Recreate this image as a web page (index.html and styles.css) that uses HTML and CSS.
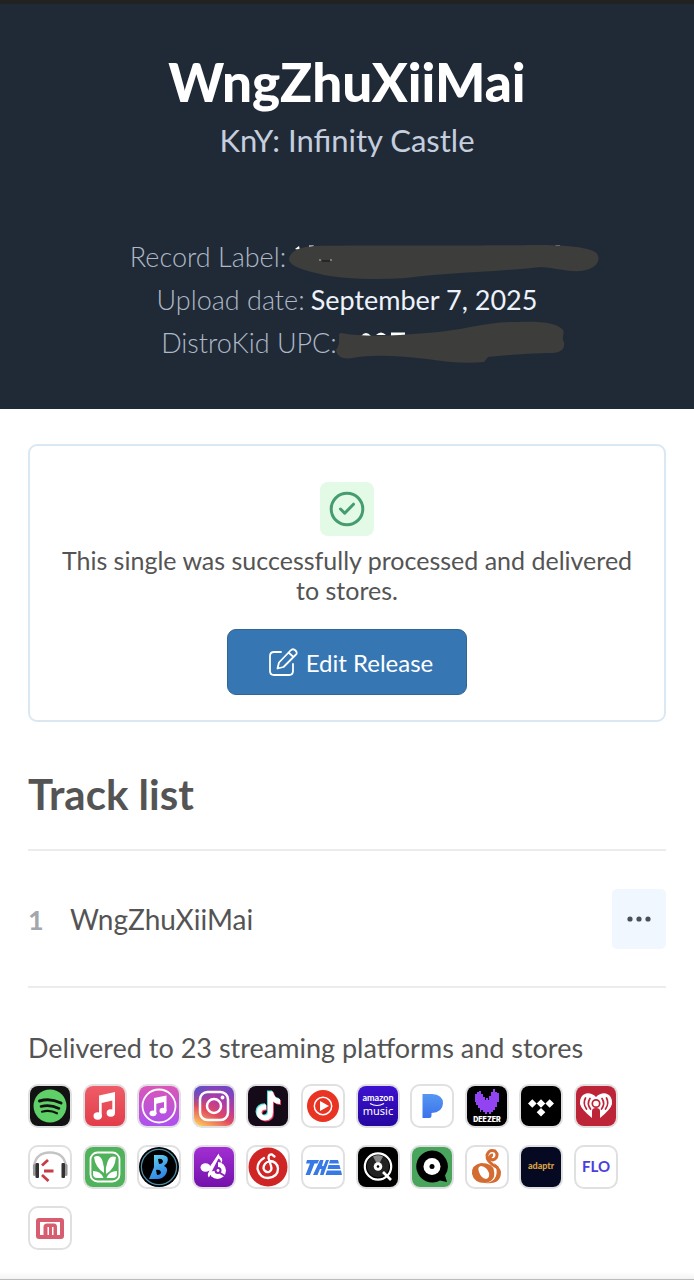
FILE: index.html
```html
<!DOCTYPE html>
<html lang="en">
<head>
<meta charset="utf-8">
<meta name="viewport" content="width=device-width, initial-scale=1">
<title>WngZhuXiiMai</title>
<link rel="stylesheet" href="styles.css">
</head>
<body>
<header class="hero">
  <h1 class="hero-title">WngZhuXiiMai</h1>
  <p class="hero-artist">KnY: Infinity Castle</p>
  <dl class="meta">
    <div class="meta-row">
      <dt>Record Label:</dt>
      <dd class="hidden-value hidden-label"><svg class="scribble" width="320" height="46" viewBox="0 0 320 46" aria-hidden="true">
        <path d="M9 14l4-3 1 4zM23 10.500h5l-2 3h-3zM269 10.500h5v3z" fill="#fff"/>
        <path d="M3 24C4 16 14 12 28 11C90 10 190 11 250 10C280 10 300 12 309 17C316 22 313 34 295 36C282 37 270 33 255 32C210 37 170 37 120 43C90 45 60 44 38 40C22 36 3 32 3 24Z" fill="#3d3d3c"/>
        <path d="M33 25h2M44 25h2" stroke="#bbb"/><path d="M36 26h8" stroke="#111"/>
      </svg></dd>
    </div>
    <div class="meta-row">
      <dt>Upload date:</dt>
      <dd>September 7, 2025</dd>
    </div>
    <div class="meta-row">
      <dt>DistroKid UPC:</dt>
      <dd class="hidden-value hidden-upc"><svg class="scribble" width="240" height="46" viewBox="0 0 240 46" aria-hidden="true">
        <path d="M24 15q5-6 10 0zM39 14q5-5 10 0zM54 11.500h14v4H54z" fill="#fff"/>
        <path d="M4 12C25 16 55 15 90 12C125 10 150 0 180 1C205 0 220 2 226 9C228 13 224 17 227 21C228 29 224 31 215 32C190 32 165 35 151 36L147 41C130 43 110 41 90 38C65 35 35 33 15 37C5 39 0 35 -1 29C3 24 2 19 2 13Z" fill="#3d3d3c"/>
      </svg></dd>
    </div>
  </dl>
</header>

<main class="content">
  <section class="status-card">
    <span class="status-badge">
      <svg width="36" height="36" viewBox="0 0 36 36" fill="none" stroke="#459c6f" stroke-width="3" stroke-linecap="round" stroke-linejoin="round" aria-hidden="true"><circle cx="18" cy="18" r="15.8"/><path d="M11.500 18l4.200 4.200 8.800-9"/></svg>
    </span>
    <p class="status-text">This single was successfully processed and delivered to stores.</p>
    <button class="edit-button" type="button">
      <svg width="30" height="30" viewBox="0 0 30 30" fill="none" stroke="currentColor" stroke-width="1.800" stroke-linecap="round" stroke-linejoin="round" aria-hidden="true"><path d="M13 5H6Q2 5 2 9V24Q2 28 6 28H21Q25 28 25 24V17M9.500 21.500L11 15.500 22.500 3.500Q25 1 27.500 3.500T27.500 8L15.500 20ZM20.500 5.500L25.500 10"/></svg>
      Edit Release
    </button>
  </section>

  <section class="tracks">
    <h2 class="tracks-title">Track list</h2>
    <ol class="track-list">
      <li class="track">
        <span class="track-number">1</span>
        <span class="track-name">WngZhuXiiMai</span>
        <button class="track-menu" type="button" aria-label="Track options">
          <svg width="24" height="6" viewBox="0 0 24 6" fill="currentColor" aria-hidden="true"><circle cx="3" cy="3" r="2.600"/><circle cx="12" cy="3" r="2.600"/><circle cx="21" cy="3" r="2.600"/></svg>
        </button>
      </li>
    </ol>
  </section>

  <section class="stores">
    <p class="stores-text">Delivered to 23 streaming platforms and stores</p>
    <ul class="store-grid">
      <li class="store"><svg viewBox="0 0 40 40" role="img" aria-label="Spotify"><rect width="40" height="40" fill="#121212"/><circle cx="20" cy="20" r="16.500" fill="#5fd068"/><g fill="none" stroke="#121212" stroke-linecap="round"><path d="M9.500 15Q20 11.500 31 17" stroke-width="3"/><path d="M11 20.500Q20 18 29 22.500" stroke-width="2.600"/><path d="M12 25.700Q20 23.500 27 27.300" stroke-width="2.200"/></g></svg></li>
      <li class="store"><svg viewBox="0 0 40 40" role="img" aria-label="Apple Music"><defs><linearGradient id="am" x2="0" y2="1"><stop stop-color="#ee5d68"/><stop offset="1" stop-color="#e23d49"/></linearGradient></defs><rect width="40" height="40" fill="url(#am)"/><g fill="#fff"><path d="M14 9.500L30 6V27H27.300V14.500L16.700 17V31H14Z"/><ellipse cx="12.700" cy="30" rx="4.200" ry="3.700"/><ellipse cx="25.800" cy="27" rx="4.200" ry="3.700"/></g></svg></li>
      <li class="store"><svg viewBox="0 0 40 40" role="img" aria-label="iTunes"><defs><linearGradient id="it" x2="0" y2="1"><stop stop-color="#d957b8"/><stop offset="1" stop-color="#ad50ee"/></linearGradient></defs><rect width="40" height="40" fill="url(#it)"/><circle cx="20" cy="20" r="16.500" fill="none" stroke="#fff" stroke-width="1.800"/><g fill="#fff"><path d="M15 12L27.500 9.500V25H25V16L17.300 17.700V28H15Z"/><ellipse cx="14" cy="27.300" rx="3.500" ry="2.900"/><ellipse cx="24" cy="24.700" rx="3.500" ry="2.900"/></g></svg></li>
      <li class="store"><svg viewBox="0 0 40 40" role="img" aria-label="Instagram"><defs><linearGradient id="ig" x1=".7" y1="0" x2=".2" y2="1"><stop stop-color="#7446c4"/><stop offset=".35" stop-color="#b63aa2"/><stop offset=".65" stop-color="#e24a60"/><stop offset="1" stop-color="#fbc35b"/></linearGradient><radialGradient id="ig2" cx="0" cy="0" r=".55"><stop stop-color="#4a55d0"/><stop offset="1" stop-color="#4a55d0" stop-opacity="0"/></radialGradient></defs><rect width="40" height="40" fill="url(#ig)"/><rect width="40" height="40" fill="url(#ig2)"/><g fill="none" stroke="#fff" stroke-width="2.500"><rect x="6" y="6" width="28" height="28" rx="7.500"/><circle cx="20" cy="20" r="7"/></g><circle cx="28.500" cy="11.500" r="1.900" fill="#fff"/></svg></li>
      <li class="store"><svg viewBox="0 0 40 40" role="img" aria-label="TikTok"><defs><path id="tt" d="M20 5.500H25Q25.800 12 32 13V18Q28 18 25 15.500V26Q25 34.500 16.500 34.500Q9 34 8.500 26.500Q9 18.500 18 18.300V23.500Q13.700 23.300 13.500 26.500Q14 29.500 16.700 29.500Q20 29.300 20 25.500Z"/></defs><rect width="40" height="40" fill="#150b18"/><use href="#tt" x="-1" y="-1" fill="#4fe3df"/><use href="#tt" x="1" y="1" fill="#f0426a"/><use href="#tt" fill="#fff"/></svg></li>
      <li class="store"><svg viewBox="0 0 40 40" role="img" aria-label="YouTube Music"><circle cx="20" cy="20" r="16" fill="#e93323"/><circle cx="20" cy="20" r="8.700" fill="none" stroke="#fff" stroke-width="1.500"/><path d="M17 15L26 20 17 25Z" fill="#fff"/></svg></li>
      <li class="store"><svg viewBox="0 0 40 40" role="img" aria-label="Amazon Music"><defs><linearGradient id="az" x2="0" y2="1"><stop stop-color="#3d12d0"/><stop offset="1" stop-color="#2507a0"/></linearGradient></defs><rect width="40" height="40" fill="url(#az)"/><text class="t-amazon" x="20" y="15">amazon</text><path d="M12 17.500Q19 21.500 26 17.500" fill="none" stroke="#fff" stroke-width="1.200"/><text class="t-music" x="20" y="29">music</text></svg></li>
      <li class="store"><svg viewBox="0 0 40 40" role="img" aria-label="Pandora"><defs><linearGradient id="pd" x2="0" y2="1"><stop stop-color="#5598f0"/><stop offset="1" stop-color="#3c71ec"/></linearGradient></defs><path d="M10.500 8H20Q31 8.500 31 17.500Q30.500 26.500 19.500 27V29.500Q19.500 32 17 32H10.500Z" fill="url(#pd)"/></svg></li>
      <li class="store"><svg viewBox="0 0 40 40" role="img" aria-label="Deezer"><rect width="40" height="40" fill="#000"/><path d="M8 8h2V6h2V5h2v3h2v3h2v3h1v-2h2v2h1v-4h2V6h2V3h2v3h2v1h2v9h-2v5h-2v3h-2v2h-2v2h-2v-2h-2v2h-2v-2h-2v-2h-2v2h-1v-4h-2v-3h-2v-3H8Z" fill="#9244f2"/><text class="t-deezer" x="20" y="36">DEEZER</text></svg></li>
      <li class="store"><svg viewBox="0 0 40 40" role="img" aria-label="TIDAL"><rect width="40" height="40" fill="#000"/><path d="M7 17.500l4.300-4.300L15.600 17.500l-4.300 4.300ZM15.700 17.500l4.300-4.300L24.300 17.500 20 21.800ZM24.400 17.500l4.300-4.300L33 17.500l-4.300 4.300ZM15.700 26.200l4.300-4.300 4.300 4.300L20 30.500Z" fill="#fff"/></svg></li>
      <li class="store"><svg viewBox="0 0 40 40" role="img" aria-label="iHeartRadio"><rect width="40" height="40" fill="#bd2437"/><path d="M20 11Q24.500 6.500 30 7.500Q37 10 36 18Q35 23 24 32V25Q24 22 20 22T16 25V32Q5 23 4 18Q3 10 10 7.500Q15.500 6.500 20 11Z" fill="#fff"/><g fill="none" stroke="#bd2437" stroke-width="1.700" stroke-linecap="round"><circle cx="20" cy="17.500" r="3.700"/><path d="M14 12.500Q10.500 17.500 14.500 23M26 12.500Q29.500 17.500 25.500 23M9.500 12Q6.500 17.500 10.500 23M30.500 12Q33.500 17.500 29.500 23"/></g></svg></li>

      <li class="store"><svg viewBox="0 0 40 40" role="img" aria-label="Headphones"><path d="M4 22V19Q6 5.500 20 5.500T36 19V22" fill="none" stroke="#c4c4c4" stroke-width="2.400"/><rect x="3" y="17" width="3" height="12" rx="1.500" fill="#999"/><rect x="34.500" y="17" width="3" height="12" rx="1.500" fill="#999"/><rect x="5.500" y="16" width="3.500" height="15" rx="1" fill="#333"/><rect x="31.500" y="16" width="3.500" height="15" rx="1" fill="#333"/><path d="M18 13L12 18.500M14 24H23.500M12 28L18.500 34" stroke="#c83c42" stroke-width="2.800"/></svg></li>
      <li class="store"><svg viewBox="0 0 40 40" role="img" aria-label="JioSaavn"><rect width="40" height="40" fill="#50b25b"/><rect x="5.500" y="5.500" width="29" height="29" rx="7" fill="none" stroke="#fff" stroke-width="1.800"/><path d="M9 10Q15 7 17.500 14Q19.500 20 19 26Q10 20 9 10ZM31 10Q25 8 22.500 15Q20 21 21 27Q30 22 31 10ZM8 24Q16 24 18.500 31H12Q8 31 8 27ZM32 24Q24 24 21.500 31H28Q32 31 32 27Z" fill="#fff"/></svg></li>
      <li class="store"><svg viewBox="0 0 40 40" role="img" aria-label="Boomplay"><defs><linearGradient id="bp" x2=".4" y2="1"><stop stop-color="#63d8ee"/><stop offset="1" stop-color="#3186e8"/></linearGradient></defs><circle cx="20" cy="20" r="20" fill="#000"/><circle cx="20" cy="20" r="17.600" fill="none" stroke="#4b8ba5" stroke-width="1.300"/><path d="M15 8H24Q31 9 28 16L25 19Q30 21 27 27Q24 32 18 32H10L13 25 15 20ZM19 12L20 17Q24 17 24 14Q23 11 19 12ZM17 23L18 28Q22 28 22 25Q21 22 17 23Z" fill="url(#bp)" fill-rule="evenodd"/></svg></li>
      <li class="store"><svg viewBox="0 0 40 40" role="img" aria-label="Anghami"><defs><linearGradient id="ag" x2="0" y2="1"><stop stop-color="#a22fd2"/><stop offset="1" stop-color="#7411ab"/></linearGradient></defs><rect width="40" height="40" fill="url(#ag)"/><circle cx="23.500" cy="23.500" r="8.500" fill="#fff"/><path d="M24 4L15 25 24 23Z" fill="#8c22be"/><ellipse cx="11.500" cy="20.500" rx="5" ry="4.200" fill="#fff"/><path d="M13.500 23.500L24.500 6.500Q25 9.500 28 11.500 29 14.500 27 16.500 27 12.500 24.500 11.500L18.500 23 15 30.500Q12 28 16 23Z" fill="#fff"/><circle cx="24" cy="23.500" r="3.500" fill="#8a21bb"/><circle cx="24" cy="23.500" r="1.400" fill="#fff"/><path d="M26 26L31 29" stroke="#8a21bb" stroke-width="2"/></svg></li>
      <li class="store"><svg viewBox="0 0 40 40" role="img" aria-label="NetEase Cloud Music"><circle cx="20" cy="20" r="19.500" fill="#cf2525"/><path d="M16 11Q9 15 9.500 22Q12 31 20 31Q30 30 30 21.500Q29 14 21.500 14Q15.500 16 15.500 21.500Q17 26 21 25Q24.500 23 23 19L20.500 11Q20.500 7 24 7.500L26.500 9.500" fill="none" stroke="#fff" stroke-width="2.300" stroke-linecap="round"/></svg></li>
      <li class="store"><svg viewBox="0 0 40 40" role="img" aria-label="Tencent Music Entertainment"><path d="M4 13H16L14.500 16.500H11.500L7 28H2.500L7 16.500H3ZM17 13H20.500L19 19H20.500L23 13H26L20.500 28H17L18.500 22H17L14.500 28H10ZM27 13H35L36 16.500H26ZM25.500 18H36.500L37.500 22H24.500ZM24 23.500H38L39 28H22.500Z" fill="#3979e6"/></svg></li>
      <li class="store"><svg viewBox="0 0 40 40" role="img" aria-label="Qobuz"><rect width="40" height="40" fill="#000"/><circle cx="20" cy="19" r="11" fill="#222"/><path d="M15 9.500Q20 7 25 9.500L21.500 16H18.500Z" fill="#888"/><circle cx="20" cy="19.500" r="13.200" fill="none" stroke="#fff" stroke-width="2.200"/><circle cx="20" cy="19.500" r="4.300" fill="#fff"/><circle cx="20" cy="19.500" r="1.300"/><path d="M25 25L33 33" stroke="#fff" stroke-width="2.600"/></svg></li>
      <li class="store"><svg viewBox="0 0 40 40" role="img" aria-label="JOOX"><rect width="40" height="40" fill="#49a55b"/><path d="M20 3.500A16 16 0 1 0 28 33.500L35 35 33 28.500A16 16 0 0 0 20 3.500Z"/><circle cx="20" cy="19.500" r="8.500" fill="#fff"/><circle cx="20" cy="19.500" r="2.500"/></svg></li>
      <li class="store"><svg viewBox="0 0 40 40" role="img" aria-label="Orange swirl"><path d="M14 16Q26 16 27 24Q29 34 18 36Q7 36 5 27Q4 18 14 16ZM14 19Q10 20 12 25Q14 31 19 32Q23 31 22 26Q20 20 14 19Z" fill="#d46c32" fill-rule="evenodd"/><path d="M18 36Q34 38 34 25Q33 20 27 16Q31 23 29 29Q27 35 18 36Z" fill="#d46c32"/><path d="M31 21Q19 15 20 8Q22 2 28 4Q32 8 28 12Q25 14 23 11Q23 8 26 8" fill="none" stroke="#d46c32" stroke-width="3"/></svg></li>
      <li class="store"><svg viewBox="0 0 40 40" role="img" aria-label="adaptr"><rect width="40" height="40" fill="#050a22"/><text class="t-adaptr" x="20" y="22">adaptr</text></svg></li>
      <li class="store"><svg viewBox="0 0 40 40" role="img" aria-label="FLO"><text class="t-flo" x="20" y="25">FLO</text></svg></li>

      <li class="store"><svg viewBox="0 0 40 40" role="img" aria-label="Red m logo"><path d="M9 10H31Q34 10 34 13V28Q34 31 31 31H9Q6 31 6 28V13Q6 10 9 10ZM10 14V27H13.500V19Q13.500 15.500 17 15.500H24Q27 15.500 27 19V27H30V14ZM17.500 19V27H19V19ZM22 19V27H23.500V19Z" fill="#d65e70" fill-rule="evenodd"/></svg></li>
    </ul>
  </section>
</main>
<footer class="page-end"></footer>
</body>
</html>
```
FILE: styles.css
```css
* {
  box-sizing: border-box;
}

body,
h1,
h2,
p,
dl,
dd,
ol,
ul {
  margin: 0;
  padding: 0;
}

body {
  min-height: 100vh;
  display: flex;
  flex-direction: column;
  background: #fff;
  color: #545454;
  font-family: Lato, "Liberation Sans", sans-serif;
}

button {
  font-family: inherit;
  cursor: pointer;
}

.hero {
  padding: 48px 28px 45px;
  border-top: 4px solid #222;
  background: #202a36;
  text-align: center;
}

.hero-title {
  color: #fff;
  font-size: 53px;
  font-weight: 900;
  line-height: 60px;
}

.hero-artist {
  margin-top: 10px;
  color: #c5cede;
  font-size: 31px;
  line-height: 36px;
}

.meta {
  margin-top: 77px;
  font-size: 27px;
  line-height: 43px;
}

.meta-row {
  display: flex;
  justify-content: center;
  gap: 6px;
}

.meta dt {
  color: #aeb8c6;
  font-weight: 300;
}

.meta dd {
  color: #edf2fb;
}

.hidden-value {
  position: relative;
}

.hidden-label {
  width: 272px;
}

.hidden-upc {
  width: 190px;
}

.scribble {
  position: absolute;
  top: 0;
  left: -6px;
  overflow: visible;
}

.content {
  flex: 1;
  padding: 35px 28px 20px;
}

.status-card {
  display: flex;
  flex-direction: column;
  align-items: center;
  padding: 36px 28px 25px;
  border: 2px solid #dae8f3;
  border-radius: 9px;
}

.status-badge {
  display: flex;
  align-items: center;
  justify-content: center;
  width: 54px;
  height: 54px;
  border-radius: 8px;
  background: #e2fae6;
}

.status-text {
  margin-top: 9px;
  font-size: 25px;
  line-height: 30px;
  text-align: center;
}

.edit-button {
  display: flex;
  align-items: center;
  justify-content: center;
  gap: 8px;
  height: 66px;
  margin-top: 24px;
  padding: 0 33px 0 40px;
  border: 1px solid #306694;
  border-radius: 9px;
  background: #3676b3;
  color: #fff;
  font-size: 24px;
}

.tracks {
  margin-top: 48px;
}

.tracks-title {
  font-size: 42px;
  line-height: 48px;
}

.track-list {
  margin-top: 31px;
  border-top: 2px solid #ececec;
  list-style: none;
}

.track {
  display: flex;
  align-items: center;
  padding: 38px 0 37px;
  border-bottom: 2px solid #ececec;
  font-size: 27px;
}

.track-number {
  width: 42px;
  color: #a3a7ad;
  font-weight: 700;
}

.track-name {
  flex: 1;
  font-size: 28px;
}

.track-menu {
  display: flex;
  align-items: center;
  justify-content: center;
  width: 54px;
  height: 60px;
  border: 0;
  border-radius: 5px;
  background: #f0f7fe;
  color: #4b5058;
}

.stores {
  margin-top: 42px;
}

.stores-text {
  font-size: 27px;
  line-height: 36px;
}

.store-grid {
  display: grid;
  grid-template-columns: repeat(auto-fill, 44px);
  gap: 17px 10px;
  justify-content: space-between;
  max-width: 590px;
  margin-top: 18px;
  list-style: none;
}

.store {
  height: 44px;
  overflow: hidden;
  border: 2px solid #e0e0e2;
  border-radius: 10px;
}

.store svg {
  display: block;
}

.store text {
  text-anchor: middle;
}

.t-amazon {
  fill: #fff;
  font-size: 9px;
  font-weight: 700;
}

.t-music {
  fill: #fff;
  font-family: "Noto Sans", sans-serif;
  font-size: 11px;
}

.t-deezer {
  fill: #fff;
  font-family: Inter, sans-serif;
  font-size: 7px;
  font-weight: 900;
}

.t-adaptr {
  fill: #d9a042;
  font-size: 9px;
  font-weight: 900;
}

.t-flo {
  fill: #4a3ee0;
  font-family: Lato, sans-serif;
  font-size: 15px;
  font-weight: 700;
}

.page-end {
  height: 8px;
  border-bottom: 1px solid #bcbcbc;
  background: linear-gradient(#fff, #f3f3f3);
}
```
